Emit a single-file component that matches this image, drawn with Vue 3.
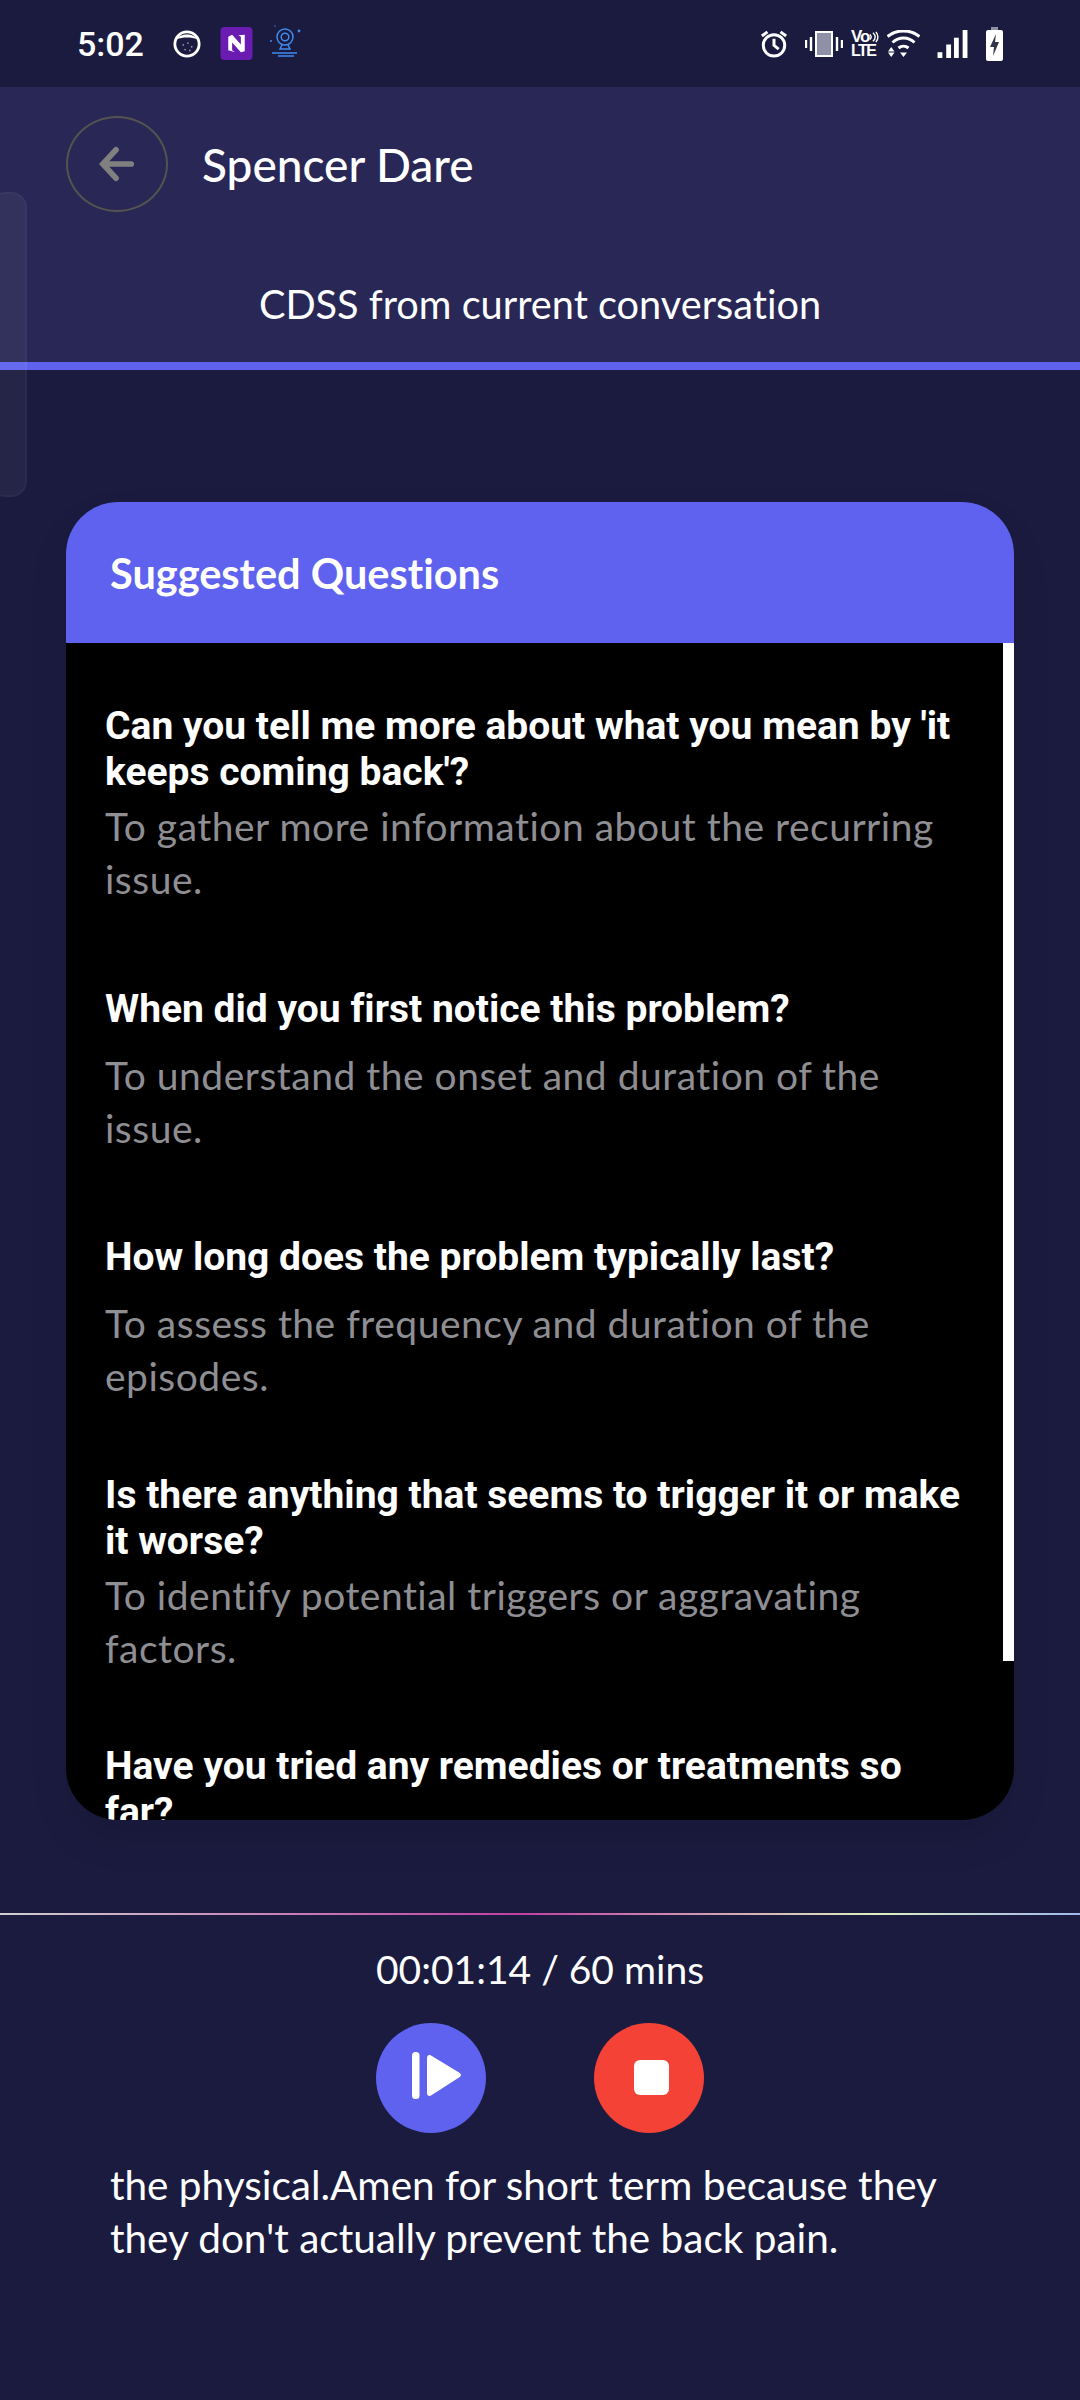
<template>
  <div class="screen">
    <div class="side-tab"></div>

    <div class="status-bar">
      <span class="clock">5:02</span>
      <svg class="ic-face" width="28" height="28" viewBox="0 0 30 30">
        <circle cx="15" cy="15" r="13" fill="#1a1b3f" stroke="#fff" stroke-width="3" />
        <path d="M4 10C7 3 23 3 26 10C20 7.500 10 7.500 4 10Z" fill="#fff" />
        <g fill="#8d8ea8">
          <circle cx="11" cy="16" r="1" /><circle cx="16" cy="14" r="1" /><circle cx="20" cy="18" r="1" />
          <circle cx="13" cy="21" r="1" /><circle cx="18" cy="22" r="1" />
        </g>
      </svg>
      <svg class="ic-note" width="33" height="33" viewBox="0 0 33 34">
        <rect width="33" height="34" rx="4" fill="#6a1bb1" />
        <path d="M8 10L12 8L21 18V10L18.500 8.500L25 8V25L21 26L12 16V24L15 26L8 24Z" fill="#fff" />
      </svg>
      <svg class="ic-cam" width="32" height="36" viewBox="0 0 32 36" fill="none" stroke="#3f8bf2" stroke-width="1.500">
        <circle cx="16" cy="13" r="8" />
        <circle cx="16" cy="13" r="3.800" />
        <path d="M13 21L11 25H21L19 21M3 29H28M9 32H25" />
        <circle cx="30" cy="7" r="1.400" fill="#3f8bf2" stroke="none" />
        <circle cx="2" cy="17" r="1" fill="#3f8bf2" stroke="none" />
        <circle cx="6" cy="2" r=".7" fill="#3f8bf2" stroke="none" />
      </svg>

      <div class="status-right">
        <svg width="28" height="29" viewBox="0 0 30 30" fill="none" stroke="#fff" stroke-width="3.200">
          <circle cx="15" cy="17" r="11.500" />
          <path d="M15 10V17L20 21M2 7L8 2.500M28 7L22 2.500" />
        </svg>
        <svg class="ic-vib" width="38" height="26" viewBox="0 0 38 26">
          <rect x="11" y="1" width="16" height="24" fill="#8f8fa8" stroke="#fff" stroke-width="2" />
          <path d="M6 6V20M1 9V17M32 6V20M37 9V17" stroke="#fff" stroke-width="2.400" fill="none" />
        </svg>
        <div class="volte">
          <div class="vo">Vo<svg width="10" height="14" viewBox="0 0 11 14" fill="none" stroke="#fff" stroke-width="1.600"><path d="M1 4C3 6 3 8 1 10M4.500 2C8 5 8 9 4.500 12M8 1C11 5 11 9 8 13" /></svg></div>
          <div class="lte">LTE</div>
        </div>
        <svg class="ic-wifi" width="33" height="27" viewBox="0 0 33 27">
          <g fill="none" stroke="#fff" stroke-width="3">
            <path d="M0.500 6.500C10 -1 23 -1 32.500 6.500" />
            <path d="M5.500 12.500C12 6.500 21 6.500 27.500 12.500" />
            <path d="M11.500 18C14.500 15.500 18.500 15.500 21.500 18" />
          </g>
          <path d="M1 21.500H7.500L4.200 17ZM1 22.500H7.500L4.200 27ZM13 22.500H20L16.500 27Z" fill="#fff" />
        </svg>
        <svg class="ic-signal" width="31" height="28" viewBox="0 0 31 29" fill="#fff">
          <rect x="0" y="23" width="5" height="6" />
          <rect x="9" y="15" width="5" height="14" />
          <rect x="17" y="8" width="5" height="21" />
          <rect x="26" y="0" width="5" height="29" />
        </svg>
        <svg class="ic-batt" width="17" height="34" viewBox="0 0 17 34">
          <rect x="5" y="0" width="7" height="4" fill="#8f8fa8" />
          <rect x="0" y="3" width="17" height="31" rx="2" fill="#fff" />
          <path d="M10 7L4 20H8L7 29L13 15H9Z" fill="#33334a" />
        </svg>
      </div>
    </div>

    <header class="top-header">
      <div class="title-row">
        <button type="button" class="back-btn" aria-label="Back">
          <svg width="36" height="36" viewBox="0 0 38 38" fill="none" stroke="#808080" stroke-width="6" stroke-linecap="round">
            <path d="M34 19H5M18 4L4 19L18 34" />
          </svg>
        </button>
        <h1>Spencer Dare</h1>
      </div>
      <p class="subtitle">CDSS from current conversation</p>
    </header>

    <section class="card">
      <h2>Suggested Questions</h2>
      <div class="card-body">
        <div class="scroll-thumb"></div>
        <div v-for="(item, index) in questions" :key="index" class="item">
          <div class="question" :class="{ short: item.short }">{{ item.q }}</div>
          <div v-if="item.why" class="reason">{{ item.why }}</div>
        </div>
      </div>
    </section>

    <footer class="session">
      <div class="rainbow-line"></div>
      <div class="timer">00:01:14 / 60 mins</div>
      <div class="controls">
        <button type="button" class="round-btn play" aria-label="Resume">
          <svg class="play-icon" width="49" height="47" viewBox="0 0 49 47" fill="#fff">
            <rect x="0" y="0" width="7.500" height="47" rx="3.500" />
            <path d="M15 6C15 3.500 17 2.500 19 3.500L47 20.500C49.500 22 49.500 24 47 25.500L19 43.500C17 44.500 15 43.500 15 41Z" />
          </svg>
        </button>
        <button type="button" class="round-btn stop" aria-label="Stop">
          <span class="stop-square"></span>
        </button>
      </div>
      <p class="transcript">the physical.Amen for short term because they they don't actually prevent the back pain.</p>
    </footer>
  </div>
</template>

<script setup>
const questions = [
  {
    q: "Can you tell me more about what you mean by 'it keeps coming back'?",
    why: 'To gather more information about the recurring issue.'
  },
  {
    q: 'When did you first notice this problem?',
    why: 'To understand the onset and duration of the issue.',
    short: true
  },
  {
    q: 'How long does the problem typically last?',
    why: 'To assess the frequency and duration of the episodes.',
    short: true
  },
  {
    q: 'Is there anything that seems to trigger it or make it worse?',
    why: 'To identify potential triggers or aggravating factors.'
  },
  {
    q: 'Have you tried any remedies or treatments so far?'
  }
]
</script>

<style>
html,
body {
  margin: 0;
  background: #1a1b3e;
}
</style>

<style scoped>
.screen {
  position: relative;
  width: 1080px;
  height: 2400px;
  overflow: hidden;
  background: #1a1b3e;
  color: #fff;
  font-family: Lato, "Open Sans", sans-serif;
  font-variant-ligatures: none;
}

.side-tab {
  position: absolute;
  left: -10px;
  top: 192px;
  width: 33px;
  height: 301px;
  border: 2px solid rgba(255, 255, 255, 0.03);
  border-radius: 16px;
  background: rgba(255, 255, 255, 0.05);
  z-index: 5;
}

.status-bar {
  height: 87px;
  display: flex;
  align-items: center;
  padding: 0 77px 0 77px;
  box-sizing: border-box;
}

.clock {
  font-family: Roboto, sans-serif;
  font-size: 34px;
  font-weight: 500;
  width: 96px;
}

.ic-note {
  margin-left: 19px;
  margin-top: -1px;
}

.ic-cam {
  margin-left: 16px;
  margin-top: -4px;
}

.status-right {
  margin-left: auto;
  display: flex;
  align-items: center;
}

.ic-vib {
  margin-left: 17px;
}

.volte {
  margin-left: 8px;
  width: 28px;
  font-family: "Liberation Sans", sans-serif;
  font-weight: 700;
}

.vo {
  display: flex;
  align-items: center;
  font-size: 17px;
  line-height: 15px;
  letter-spacing: -1px;
  height: 15px;
}

.lte {
  font-size: 16px;
  line-height: 14px;
  letter-spacing: -1.500px;
  height: 14px;
}

.ic-wifi {
  margin-left: 8px;
}

.ic-signal {
  margin-left: 17px;
}

.ic-batt {
  margin-left: 18px;
}

.top-header {
  height: 283px;
  box-sizing: border-box;
  background: #292755;
  border-bottom: 8px solid #5e62ee;
  padding-top: 29px;
}

.title-row {
  display: flex;
  align-items: center;
  padding-left: 66px;
}

.back-btn {
  width: 102px;
  height: 96px;
  padding: 0;
  border-radius: 50%;
  border: 2px solid #55534f;
  background: transparent;
  display: grid;
  place-items: center;
}

h1 {
  margin: 0 0 0 34px;
  font-size: 46px;
  font-weight: 500;
}

.subtitle {
  margin: 67px 0 0;
  text-align: center;
  font-size: 39.700px;
  line-height: 50px;
}

.card {
  margin: 132px 66px 0;
  height: 1318px;
  border-radius: 52px;
  overflow: hidden;
  background: #000;
  box-shadow: 0 20px 40px rgba(0, 0, 0, 0.08);
  display: flex;
  flex-direction: column;
}

h2 {
  margin: 0;
  height: 141px;
  flex: none;
  box-sizing: border-box;
  padding: 46px 0 0 44px;
  background: #5e62ee;
  font-size: 41.500px;
  line-height: 50px;
  font-weight: 700;
}

.card-body {
  position: relative;
  flex: 1;
  overflow: hidden;
  padding: 60px 44px 0 39px;
  display: flex;
  flex-direction: column;
  gap: 68.500px;
}

.scroll-thumb {
  position: absolute;
  top: 0;
  right: 0;
  width: 11px;
  height: 1018px;
  background: #fff;
}

.question {
  font-family: Roboto, sans-serif;
  font-size: 39px;
  font-weight: 700;
  line-height: 46px;
}

.question.short {
  padding: 11px 0 12px;
}

.reason {
  margin-top: 5px;
  color: #8e8e93;
  font-size: 39px;
  letter-spacing: 0.5px;
  line-height: 53px;
}

.session {
  margin-top: 93px;
}

.rainbow-line {
  height: 2px;
  background: linear-gradient(90deg, #d0d0d0, #c33fa5 48%, #dff0c0 81%, #a0b8f0);
}

.timer {
  margin-top: 29px;
  text-align: center;
  font-size: 39px;
  line-height: 50px;
}

.controls {
  margin-top: 29px;
  display: flex;
  justify-content: center;
  gap: 108px;
}

.round-btn {
  width: 110px;
  height: 110px;
  padding: 0;
  border: none;
  border-radius: 50%;
  display: grid;
  place-items: center;
}

.play {
  background: #5e62ee;
}

.play-icon {
  margin: 0 0 5px 11px;
}

.stop {
  background: #f44336;
}

.stop-square {
  width: 35px;
  height: 35px;
  border-radius: 6px;
  background: #fff;
  margin: -1px 0 0 4px;
}

.transcript {
  margin: 25px 0 0;
  padding: 0 100px 0 110px;
  font-size: 40.500px;
  line-height: 53px;
}
</style>
